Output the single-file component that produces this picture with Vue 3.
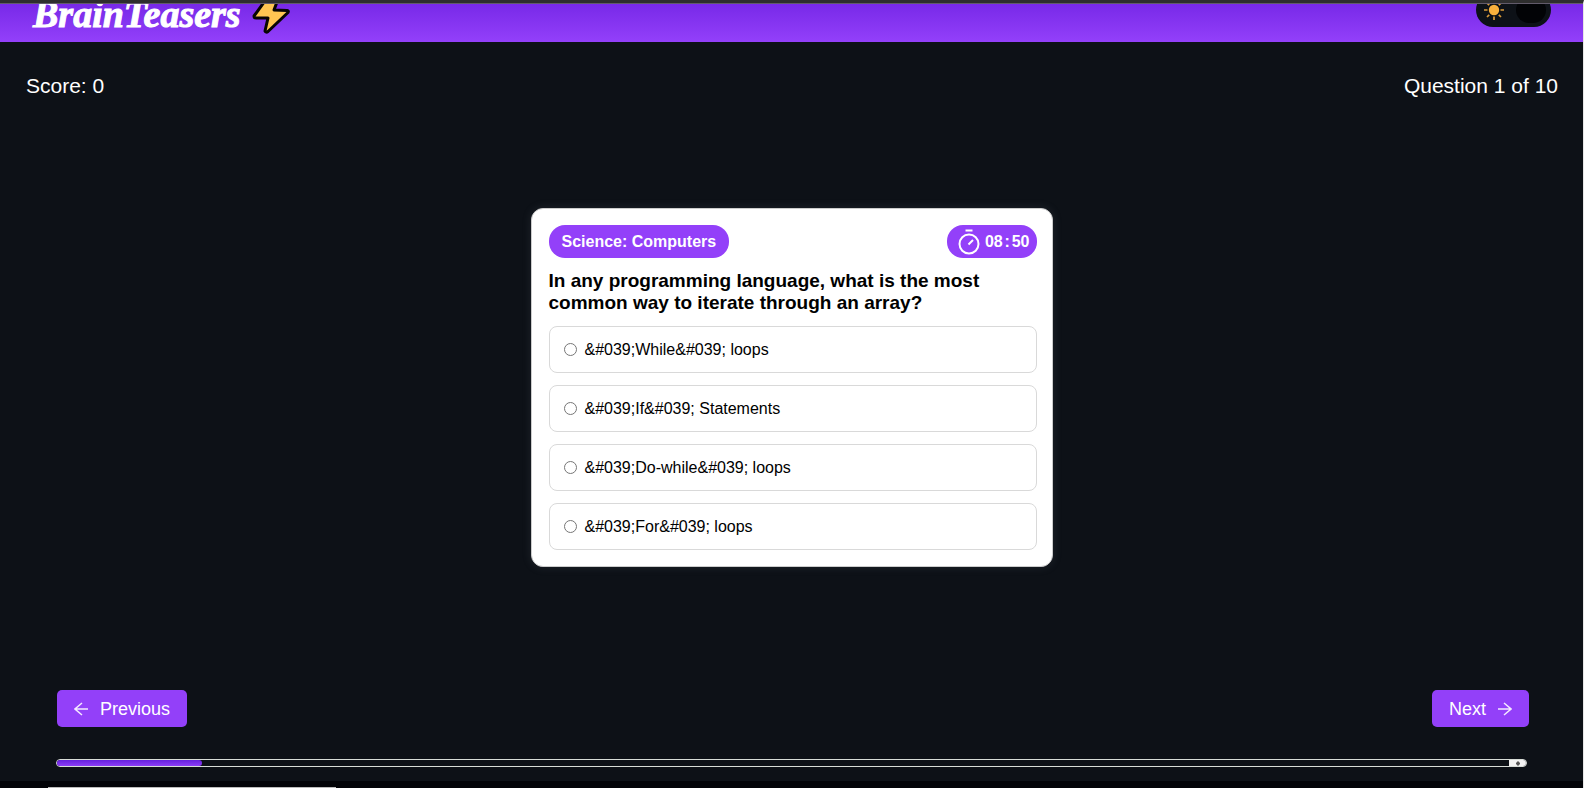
<script setup>
import { ref } from 'vue'
const options = ['&#039;While&#039; loops', '&#039;If&#039; Statements', '&#039;Do-while&#039; loops', '&#039;For&#039; loops']
const picked = ref('')
const progress = 10
</script>

<template>
  <div class="page">
    <header class="header">
      <a class="brand" href="#">
        <span>BrainTeasers</span>
        <svg class="bolt" viewBox="0 0 38 42" aria-hidden="true">
          <path d="M18 2 L2 24 Q2 26 4 26 L16 26 L13 39 Q14 41 16 39.500 L36 20.500 Q37 19 35 18.500 L22 18 L28 2 Z" fill="#ffc552" stroke="#080604" stroke-width="3" stroke-linejoin="round" />
        </svg>
      </a>
      <button class="toggle" type="button" aria-label="Toggle theme">
        <svg viewBox="0 0 20 20" width="20" height="20" fill="none" stroke="#d99a3a" stroke-width="1.700">
          <circle cx="10" cy="10" r="5.200" fill="#f9b03c" stroke="none" />
          <path d="M10 0v3.500M10 16.500V20M0 10h3.500M16.500 10H20M3 3l2.200 2.200M14.800 14.800L17 17M3 17l2.200-2.200M14.800 5.200L17 3" />
        </svg>
        <span class="knob"></span>
      </button>
    </header>

    <div class="status">
      <span>Score: 0</span>
      <span>Question 1 of 10</span>
    </div>

    <main class="stage">
      <section class="card">
        <div class="meta">
          <span class="badge">Science: Computers</span>
          <span class="badge timer">
            <svg viewBox="0 0 24 28" width="24" height="28" fill="none" stroke="#fff" stroke-width="2">
              <path d="M8.500 2.500h7" />
              <circle cx="12" cy="16" r="9.500" />
              <path d="M11.500 16.500L16 12" />
            </svg>
            <span>08</span><span class="colon">:</span><span>50</span>
          </span>
        </div>
        <h1 class="question">In any programming language, what is the most common way to iterate through an array?</h1>
        <div class="options">
          <label v-for="o in options" :key="o" class="option">
            <input v-model="picked" type="radio" name="answer" :value="o" />
            <span>{{ o }}</span>
          </label>
        </div>
      </section>
    </main>

    <nav class="nav">
      <button type="button">
        <svg viewBox="0 0 14 14" width="14" height="14" fill="none" stroke="#f4e9ff" stroke-width="1.500"><path d="M14 7H1M8 1L1 7l7 6" /></svg>
        Previous
      </button>
      <button type="button">
        Next
        <svg viewBox="0 0 14 14" width="14" height="14" fill="none" stroke="#f4e9ff" stroke-width="1.500"><path d="M0 7h13M6 1l7 6-7 6" /></svg>
      </button>
    </nav>

    <div class="progress" role="progressbar" aria-label="Quiz progress" :aria-valuenow="progress" aria-valuemin="0" aria-valuemax="100">
      <div class="track">
        <div class="fill" :style="{ width: progress + '%' }"></div>
      </div>
      <div class="cap">
        <svg viewBox="0 0 6 6" width="6" height="6"><path d="M3 1l2 2H1zM3 6L1 4h4zM1 3h4v1H1z" fill="#555" /></svg>
      </div>
    </div>
    <footer class="footer"><div class="thumb"></div></footer>
  </div>
</template>

<style>
body {
  background: #0d1117;
}
</style>

<style scoped>
.page {
  box-sizing: border-box;
  height: 100vh;
  display: flex;
  flex-direction: column;
  overflow: hidden;
  border-top: 3px solid #2e2e2e;
  border-right: 1px solid #e6e6e6;
  background: #0d1117;
  color: #fff;
  font-family: "Liberation Sans", Arial, sans-serif;
}
.header {
  flex: none;
  box-sizing: border-box;
  height: 39px;
  display: flex;
  align-items: flex-end;
  justify-content: space-between;
  padding: 0 32px 0 33px;
  overflow: hidden;
  border-top: 1px solid #625b6b;
  background: linear-gradient(#7829e8, #9340fa);
}
.brand {
  display: flex;
  align-items: flex-end;
  gap: 11px;
  padding-bottom: 8px;
  color: #fff;
  font: italic 700 38px/40px "Liberation Serif", serif;
  -webkit-text-stroke: 1px #fff;
  text-decoration: none;
}
.bolt {
  width: 38px;
  height: 42px;
}
.toggle {
  box-sizing: border-box;
  width: 75px;
  height: 34px;
  flex: none;
  display: flex;
  align-items: center;
  justify-content: space-between;
  margin-bottom: 15px;
  padding: 0 5px 0 8px;
  border: 0;
  border-radius: 17px;
  background: #0d1117;
}
.knob {
  width: 30px;
  height: 26px;
  border-radius: 13px;
  background: #020306;
}
.status {
  display: flex;
  justify-content: space-between;
  padding: 32px 25px 0 26px;
  font-size: 21px;
  line-height: 24px;
}
.stage {
  flex: 1;
  display: flex;
  align-items: center;
  justify-content: center;
  padding-bottom: 13px;
}
.card {
  box-sizing: border-box;
  width: 522px;
  padding: 16px 15px 16px 17px;
  border: 1px solid #ccc;
  border-radius: 12px;
  background: #fff;
  box-shadow: 0 0 10px rgba(100, 110, 120, 0.2);
  color: #000;
}
.meta {
  display: flex;
  justify-content: space-between;
}
.badge {
  height: 33px;
  display: flex;
  align-items: center;
  padding: 0 13px;
  border-radius: 16px;
  background: #9340f9;
  color: #fff;
  font-size: 16px;
  font-weight: 700;
}
.timer {
  padding: 0 7px 0 10px;
}
.timer svg {
  margin-right: 4px;
}
.colon {
  width: 9px;
  text-align: center;
}
.question {
  margin: 12px 0;
  font-size: 19px;
  line-height: 22px;
}
.options {
  display: grid;
  gap: 12px;
}
.option {
  box-sizing: border-box;
  height: 47px;
  display: flex;
  align-items: center;
  gap: 8px;
  padding: 0 14px;
  border: 1px solid #d9d9d9;
  border-radius: 8px;
  font-size: 16px;
}
.option input {
  width: 13px;
  height: 13px;
  margin: 0;
}
.nav {
  display: flex;
  justify-content: space-between;
  padding: 0 54px 0 57px;
}
.nav button {
  height: 37px;
  display: flex;
  align-items: center;
  gap: 12px;
  padding: 0 17px;
  border: 0;
  border-radius: 5px;
  background: #9340f9;
  color: #fff;
  font: 18px/20px "Liberation Sans", Arial, sans-serif;
}
.progress {
  box-sizing: border-box;
  height: 8px;
  flex: none;
  display: flex;
  margin: 32px 56px 14px 56px;
  overflow: hidden;
  border: 1px solid #d7dcd7;
  border-radius: 4px;
}
.track {
  flex: 1;
  display: flex;
}
.fill {
  border-radius: 0 3px 3px 0;
  background: linear-gradient(#6420dc, #8b3cf7);
}
.cap {
  width: 17px;
  display: flex;
  align-items: center;
  justify-content: center;
  background: #f2f2f2;
}
.footer {
  height: 7px;
  flex: none;
  display: flex;
  align-items: flex-end;
  padding-left: 48px;
  background: #020307;
}
.thumb {
  width: 288px;
  height: 1px;
  background: #bbb;
}
</style>
